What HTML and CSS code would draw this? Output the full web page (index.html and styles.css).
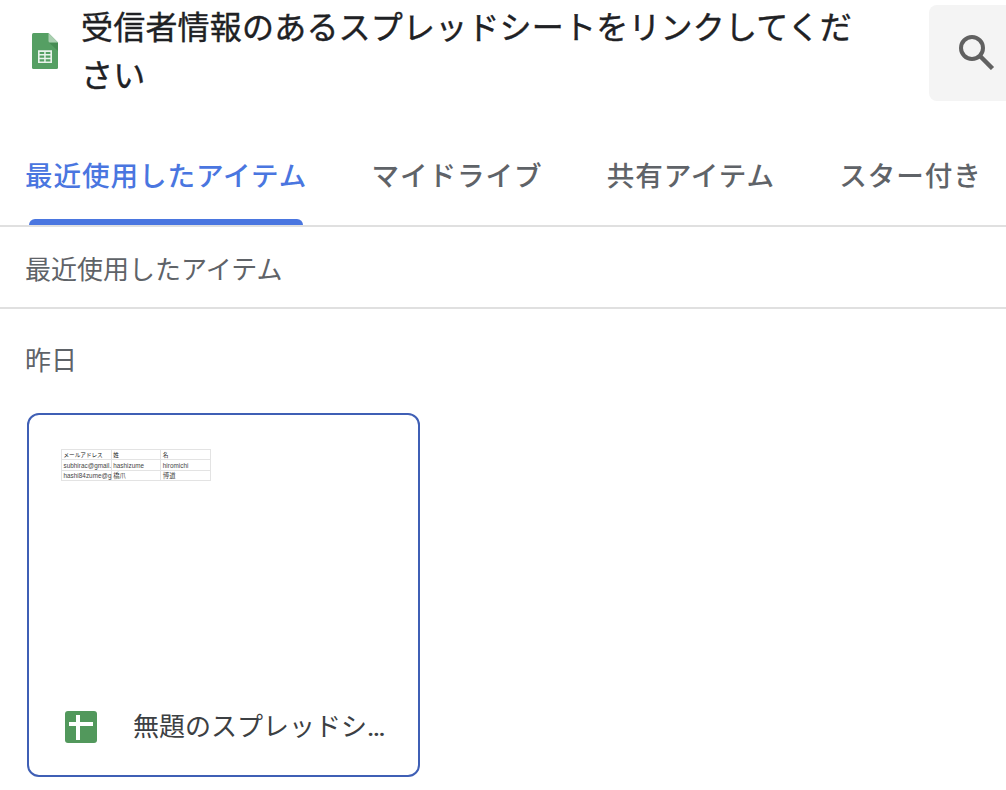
FILE: index.html
```
<!DOCTYPE html>
<html lang="ja">
<head>
    <meta charset="UTF-8">
    <meta name="viewport" content="width=device-width, initial-scale=1.0">
    <title>スプレッドシートをリンク</title>
    <link rel="stylesheet" href="styles.css">
</head>
<body>
<div class="picker">
    <header class="picker-header">
        <svg class="sheets-logo" width="26" height="36" viewBox="0 0 26 36">
            <path d="M1.5 0H16.5L26 9.5V34.5Q26 36 24.5 36H1.5Q0 36 0 34.5V1.5Q0 0 1.5 0Z" fill="#559f63"/>
            <path d="M17 9.5H26V18Z" fill="#468c53"/>
            <path d="M16.5 0L26 9.5H18Q16.5 9.5 16.5 8Z" fill="#a9cfb0"/>
            <path d="M6 17.3H20V30H6ZM7.6 19V21H12.2V19ZM13.7 19V21H18.4V19ZM7.6 22.5V24.7H12.2V22.5ZM13.7 22.5V24.7H18.4V22.5ZM7.6 26.2V28.4H12.2V26.2ZM13.7 26.2V28.4H18.4V26.2Z" fill="#e9f3eb" fill-rule="evenodd"/>
        </svg>
        <h1 class="picker-title">受信者情報のあるスプレッドシートをリンクしてください</h1>
        <button class="search-button" aria-label="検索">
            <svg width="36" height="36" viewBox="0 0 36 36" fill="none" stroke="#616161">
                <circle cx="13" cy="14" r="11" stroke-width="4"/>
                <path d="M21.5 22.5L33.5 34.5" stroke-width="4.5"/>
            </svg>
        </button>
    </header>

    <nav class="tabs">
        <div class="tab active">最近使用したアイテム</div>
        <div class="tab">マイドライブ</div>
        <div class="tab">共有アイテム</div>
        <div class="tab">スター付き</div>
    </nav>

    <div class="list-heading">最近使用したアイテム</div>

    <main class="file-list">
        <div class="date-label">昨日</div>
        <div class="file-card">
            <table class="preview">
                <tr class="preview-head"><td>メールアドレス</td><td>姓</td><td>名</td></tr>
                <tr><td>subhirac@gmail.</td><td>hashizume</td><td>hiromichi</td></tr>
                <tr><td>hashi84zume@g</td><td>橋爪</td><td>博道</td></tr>
            </table>
            <div class="file-info">
                <svg class="file-icon" width="32" height="32" viewBox="0 0 32 32">
                    <rect width="32" height="32" rx="3" fill="#52985c"/>
                    <path d="M4 11H11V4H15V11H28V15H15V29H11V15H4Z" fill="#fff"/>
                </svg>
                <div class="file-name">無題のスプレッドシ<span class="dots">…</span></div>
            </div>
        </div>
    </main>
</div>
</body>
</html>
```
FILE: styles.css
```
* {
    margin: 0;
    padding: 0;
    box-sizing: border-box;
}

body {
    font-family: 'Noto Sans CJK JP', sans-serif;
    background: white;
    overflow: hidden;
}

.picker {
    width: 1006px;
    height: 790px;
    overflow: hidden;
}

.picker-header {
    display: flex;
    align-items: flex-start;
    height: 126px;
    padding: 5px 0 0 32px;
}

.sheets-logo {
    flex: none;
    margin-top: 28px;
}

.picker-title {
    width: 790px;
    flex: none;
    margin: -3px 0 0 23px;
    font-size: 32px;
    font-weight: 400;
    line-height: 47.5px;
    letter-spacing: 0.2px;
    color: #202124;
    -webkit-text-stroke: 0.4px #202124;
}

.search-button {
    display: flex;
    align-items: flex-start;
    width: 96px;
    height: 96px;
    flex: none;
    margin-left: 58px;
    padding: 29px 0 0 30px;
    border: none;
    border-radius: 8px;
    background: #f4f4f4;
}

.tabs {
    display: flex;
    gap: 64.3px;
    height: 101px;
    padding-left: 25px;
    border-bottom: 2px solid #e0e0e0;
}

.tab {
    display: flex;
    flex-direction: column;
    flex: none;
    padding-top: 3px;
    font-size: 27.6px;
    font-weight: 500;
    line-height: 90px;
    letter-spacing: 0.9px;
    color: #5f6368;
    white-space: nowrap;
}

.tab.active {
    color: #4a76e0;
}

.tab.active::after {
    content: '';
    height: 6px;
    flex: none;
    margin: 0 4px;
    border-radius: 6px 6px 0 0;
    background: #4a76e0;
}

.list-heading {
    height: 82px;
    padding-left: 25px;
    border-bottom: 2px solid #e0e0e0;
    font-size: 26px;
    line-height: 82px;
    color: #5f6368;
}

.file-list {
    padding: 0 27px;
}

.date-label {
    height: 104px;
    margin-left: -2px;
    font-size: 26px;
    line-height: 100px;
    color: #5f6368;
}

.file-card {
    display: flex;
    flex-direction: column;
    justify-content: space-between;
    width: 393px;
    height: 364px;
    padding: 34px 32px 32px;
    border: 2px solid #3f5fb5;
    border-radius: 12px;
}

.preview {
    width: 150px;
    table-layout: fixed;
    border-collapse: collapse;
    font-family: 'Liberation Sans', 'Noto Sans CJK JP', sans-serif;
    font-size: 6.3px;
    line-height: 8px;
    letter-spacing: 0.05px;
    color: #444;
}

.preview td {
    height: 10.4px;
    padding: 1px 0 0 1.5px;
    border: 1px solid #e3e3e3;
    white-space: nowrap;
}

.preview-head {
    font-size: 5.6px;
    letter-spacing: 0;
    color: #222;
}

.file-info {
    display: flex;
    align-items: center;
    height: 32px;
    padding-left: 4px;
}

.file-icon {
    flex: none;
}

.file-name {
    flex: none;
    margin-left: 36px;
    font-family: Roboto, 'Noto Sans CJK JP', sans-serif;
    font-size: 26px;
    line-height: 40px;
    color: #3c4043;
    white-space: nowrap;
}

.dots {
    font-weight: 500;
}
```
